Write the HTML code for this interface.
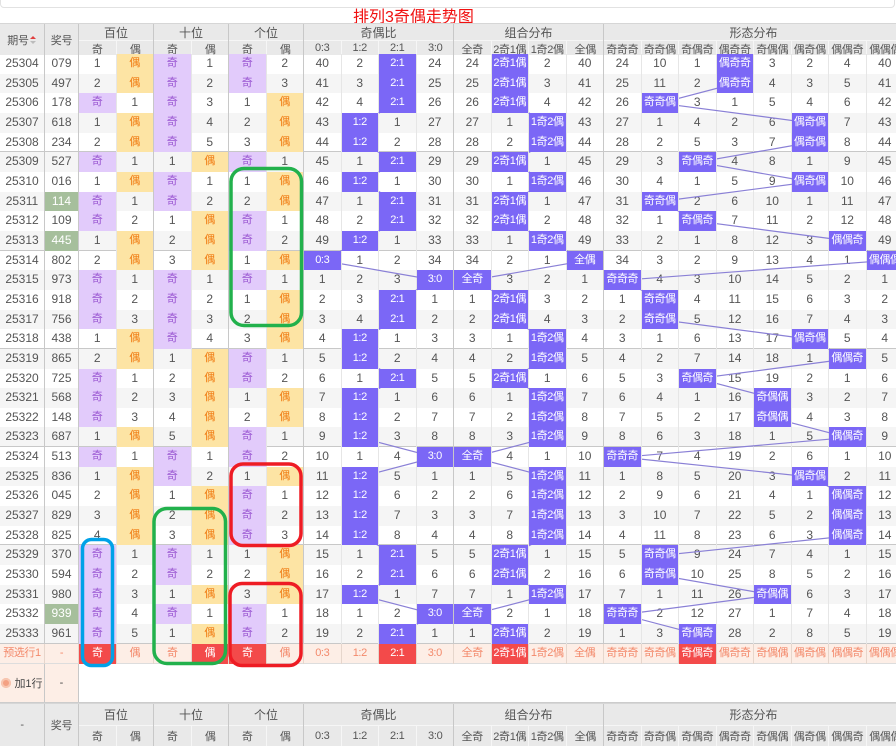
<!DOCTYPE html>
<html><head><meta charset="utf-8"><style>
body{margin:0;width:896px;height:745px;overflow:hidden;background:#fff;font-family:"Liberation Sans","Noto Sans CJK SC",sans-serif;font-size:12px;color:#555;position:relative}
.top{position:absolute;left:0;top:-12px;width:893px;height:18px;border:1px solid #e2e2e2;border-radius:4px}
.title{position:absolute;left:353px;top:7px;font-size:16px;color:#f01010;line-height:22px;white-space:nowrap}
.hd{position:absolute;left:0;display:flex;background:#e9e9e9;border-top:1px solid #d6d6d6;white-space:nowrap;font-size:11px}
.hd i{font-style:normal;display:flex;align-items:center;justify-content:center;box-sizing:border-box;border-right:1px solid #c8c8c8;flex:none;letter-spacing:-0.3px}
.gp{flex:none;box-sizing:border-box;border-right:1px solid #c8c8c8;display:flex;flex-direction:column}
.gp b{font-weight:normal;display:flex;align-items:center;justify-content:center;border-bottom:1px solid #f6f6f6;font-size:12px}
.gp div{display:flex;flex:1}
.gp div i{width:37.5px;border-right:1px solid #f6f6f6}
.gp div i:last-child{border-right:none}
#body{position:absolute;left:0;top:54px}
.r{display:flex;height:19.67px;white-space:nowrap}
.r:nth-child(even){background:#f5f5f5}
.r:nth-child(5n){box-shadow:inset 0 -1px #c8c8c8}
.r i{font-style:normal;flex:none;width:37.5px;height:100%;line-height:19.67px;text-align:center;box-sizing:border-box;border-right:1px solid #e6e6e6;overflow:hidden}
.r i:nth-child(1){width:45px}.r i:nth-child(2){width:34px}
.r i:nth-child(1),.r i:nth-child(2),.r i:nth-child(4),.r i:nth-child(6),.r i:nth-child(8),.r i:nth-child(12),.r i:nth-child(16){border-right-color:#c8c8c8}
.o{background:#e2cbfb;color:#9a56d2;font-size:11px}
.e{background:#fde4a4;color:#f07a10;font-size:11px}
.h{background:#7b67f6;color:#fff;position:relative;z-index:2;font-size:11px;letter-spacing:-0.4px}
.g{background:#a6bf9c;color:#fff}
.pv{background:#fdeee6;color:#f3896b;box-shadow:inset 0 -1px #ddd}
.pv i{border-right-color:#e6d6cc!important;font-size:11px;letter-spacing:-0.4px}
.rd{background:#f34a4a;color:#fff}
.add{position:absolute;left:0;top:664px;width:896px;height:39px;border-bottom:1px solid #ccc;box-sizing:border-box}
.add div{position:absolute;top:0;height:38px;background:#fdeee6;border-right:1px solid #c8c8c8;box-sizing:border-box;display:flex;align-items:center;justify-content:center;color:#444;font-size:11px}
svg{position:absolute;left:0;top:0}
</style></head><body>
<div class="top"></div>
<div class="title">排列3奇偶走势图</div>

<div class="hd" style="top:23px;height:31px">
<i style="width:45px">期号<svg style="position:relative" width="8" height="10" viewBox="0 0 8 10"><path d="M1 4L4 1L7 4Z" fill="#e04040"/><path d="M1 6L4 9L7 6Z" fill="#bbb"/></svg></i>
<i style="width:34px">奖号</i>
<div class="gp" style="width:75px"><b style="height:16px">百位</b><div><i>奇</i><i>偶</i></div></div>
<div class="gp" style="width:75px"><b style="height:16px">十位</b><div><i>奇</i><i>偶</i></div></div>
<div class="gp" style="width:75px"><b style="height:16px">个位</b><div><i>奇</i><i>偶</i></div></div>
<div class="gp" style="width:150px"><b style="height:16px">奇偶比</b><div><i>0:3</i><i>1:2</i><i>2:1</i><i>3:0</i></div></div>
<div class="gp" style="width:150px"><b style="height:16px">组合分布</b><div><i>全奇</i><i>2奇1偶</i><i>1奇2偶</i><i>全偶</i></div></div>
<div class="gp" style="width:300px"><b style="height:16px">形态分布</b><div><i>奇奇奇</i><i>奇奇偶</i><i>奇偶奇</i><i>偶奇奇</i><i>奇偶偶</i><i>偶奇偶</i><i>偶偶奇</i><i>偶偶偶</i></div></div>
</div>

<div id="body">
<div class="r"><i>25304</i><i>079</i><i>1</i><i class="e">偶</i><i class="o">奇</i><i>1</i><i class="o">奇</i><i>2</i><i>40</i><i>2</i><i class="h">2:1</i><i>24</i><i>24</i><i class="h">2奇1偶</i><i>2</i><i>40</i><i>24</i><i>10</i><i>1</i><i class="h">偶奇奇</i><i>3</i><i>2</i><i>4</i><i>40</i></div>
<div class="r"><i>25305</i><i>497</i><i>2</i><i class="e">偶</i><i class="o">奇</i><i>2</i><i class="o">奇</i><i>3</i><i>41</i><i>3</i><i class="h">2:1</i><i>25</i><i>25</i><i class="h">2奇1偶</i><i>3</i><i>41</i><i>25</i><i>11</i><i>2</i><i class="h">偶奇奇</i><i>4</i><i>3</i><i>5</i><i>41</i></div>
<div class="r"><i>25306</i><i>178</i><i class="o">奇</i><i>1</i><i class="o">奇</i><i>3</i><i>1</i><i class="e">偶</i><i>42</i><i>4</i><i class="h">2:1</i><i>26</i><i>26</i><i class="h">2奇1偶</i><i>4</i><i>42</i><i>26</i><i class="h">奇奇偶</i><i>3</i><i>1</i><i>5</i><i>4</i><i>6</i><i>42</i></div>
<div class="r"><i>25307</i><i>618</i><i>1</i><i class="e">偶</i><i class="o">奇</i><i>4</i><i>2</i><i class="e">偶</i><i>43</i><i class="h">1:2</i><i>1</i><i>27</i><i>27</i><i>1</i><i class="h">1奇2偶</i><i>43</i><i>27</i><i>1</i><i>4</i><i>2</i><i>6</i><i class="h">偶奇偶</i><i>7</i><i>43</i></div>
<div class="r"><i>25308</i><i>234</i><i>2</i><i class="e">偶</i><i class="o">奇</i><i>5</i><i>3</i><i class="e">偶</i><i>44</i><i class="h">1:2</i><i>2</i><i>28</i><i>28</i><i>2</i><i class="h">1奇2偶</i><i>44</i><i>28</i><i>2</i><i>5</i><i>3</i><i>7</i><i class="h">偶奇偶</i><i>8</i><i>44</i></div>
<div class="r"><i>25309</i><i>527</i><i class="o">奇</i><i>1</i><i>1</i><i class="e">偶</i><i class="o">奇</i><i>1</i><i>45</i><i>1</i><i class="h">2:1</i><i>29</i><i>29</i><i class="h">2奇1偶</i><i>1</i><i>45</i><i>29</i><i>3</i><i class="h">奇偶奇</i><i>4</i><i>8</i><i>1</i><i>9</i><i>45</i></div>
<div class="r"><i>25310</i><i>016</i><i>1</i><i class="e">偶</i><i class="o">奇</i><i>1</i><i>1</i><i class="e">偶</i><i>46</i><i class="h">1:2</i><i>1</i><i>30</i><i>30</i><i>1</i><i class="h">1奇2偶</i><i>46</i><i>30</i><i>4</i><i>1</i><i>5</i><i>9</i><i class="h">偶奇偶</i><i>10</i><i>46</i></div>
<div class="r"><i>25311</i><i class="g">114</i><i class="o">奇</i><i>1</i><i class="o">奇</i><i>2</i><i>2</i><i class="e">偶</i><i>47</i><i>1</i><i class="h">2:1</i><i>31</i><i>31</i><i class="h">2奇1偶</i><i>1</i><i>47</i><i>31</i><i class="h">奇奇偶</i><i>2</i><i>6</i><i>10</i><i>1</i><i>11</i><i>47</i></div>
<div class="r"><i>25312</i><i>109</i><i class="o">奇</i><i>2</i><i>1</i><i class="e">偶</i><i class="o">奇</i><i>1</i><i>48</i><i>2</i><i class="h">2:1</i><i>32</i><i>32</i><i class="h">2奇1偶</i><i>2</i><i>48</i><i>32</i><i>1</i><i class="h">奇偶奇</i><i>7</i><i>11</i><i>2</i><i>12</i><i>48</i></div>
<div class="r"><i>25313</i><i class="g">445</i><i>1</i><i class="e">偶</i><i>2</i><i class="e">偶</i><i class="o">奇</i><i>2</i><i>49</i><i class="h">1:2</i><i>1</i><i>33</i><i>33</i><i>1</i><i class="h">1奇2偶</i><i>49</i><i>33</i><i>2</i><i>1</i><i>8</i><i>12</i><i>3</i><i class="h">偶偶奇</i><i>49</i></div>
<div class="r"><i>25314</i><i>802</i><i>2</i><i class="e">偶</i><i>3</i><i class="e">偶</i><i>1</i><i class="e">偶</i><i class="h">0:3</i><i>1</i><i>2</i><i>34</i><i>34</i><i>2</i><i>1</i><i class="h">全偶</i><i>34</i><i>3</i><i>2</i><i>9</i><i>13</i><i>4</i><i>1</i><i class="h">偶偶偶</i></div>
<div class="r"><i>25315</i><i>973</i><i class="o">奇</i><i>1</i><i class="o">奇</i><i>1</i><i class="o">奇</i><i>1</i><i>1</i><i>2</i><i>3</i><i class="h">3:0</i><i class="h">全奇</i><i>3</i><i>2</i><i>1</i><i class="h">奇奇奇</i><i>4</i><i>3</i><i>10</i><i>14</i><i>5</i><i>2</i><i>1</i></div>
<div class="r"><i>25316</i><i>918</i><i class="o">奇</i><i>2</i><i class="o">奇</i><i>2</i><i>1</i><i class="e">偶</i><i>2</i><i>3</i><i class="h">2:1</i><i>1</i><i>1</i><i class="h">2奇1偶</i><i>3</i><i>2</i><i>1</i><i class="h">奇奇偶</i><i>4</i><i>11</i><i>15</i><i>6</i><i>3</i><i>2</i></div>
<div class="r"><i>25317</i><i>756</i><i class="o">奇</i><i>3</i><i class="o">奇</i><i>3</i><i>2</i><i class="e">偶</i><i>3</i><i>4</i><i class="h">2:1</i><i>2</i><i>2</i><i class="h">2奇1偶</i><i>4</i><i>3</i><i>2</i><i class="h">奇奇偶</i><i>5</i><i>12</i><i>16</i><i>7</i><i>4</i><i>3</i></div>
<div class="r"><i>25318</i><i>438</i><i>1</i><i class="e">偶</i><i class="o">奇</i><i>4</i><i>3</i><i class="e">偶</i><i>4</i><i class="h">1:2</i><i>1</i><i>3</i><i>3</i><i>1</i><i class="h">1奇2偶</i><i>4</i><i>3</i><i>1</i><i>6</i><i>13</i><i>17</i><i class="h">偶奇偶</i><i>5</i><i>4</i></div>
<div class="r"><i>25319</i><i>865</i><i>2</i><i class="e">偶</i><i>1</i><i class="e">偶</i><i class="o">奇</i><i>1</i><i>5</i><i class="h">1:2</i><i>2</i><i>4</i><i>4</i><i>2</i><i class="h">1奇2偶</i><i>5</i><i>4</i><i>2</i><i>7</i><i>14</i><i>18</i><i>1</i><i class="h">偶偶奇</i><i>5</i></div>
<div class="r"><i>25320</i><i>725</i><i class="o">奇</i><i>1</i><i>2</i><i class="e">偶</i><i class="o">奇</i><i>2</i><i>6</i><i>1</i><i class="h">2:1</i><i>5</i><i>5</i><i class="h">2奇1偶</i><i>1</i><i>6</i><i>5</i><i>3</i><i class="h">奇偶奇</i><i>15</i><i>19</i><i>2</i><i>1</i><i>6</i></div>
<div class="r"><i>25321</i><i>568</i><i class="o">奇</i><i>2</i><i>3</i><i class="e">偶</i><i>1</i><i class="e">偶</i><i>7</i><i class="h">1:2</i><i>1</i><i>6</i><i>6</i><i>1</i><i class="h">1奇2偶</i><i>7</i><i>6</i><i>4</i><i>1</i><i>16</i><i class="h">奇偶偶</i><i>3</i><i>2</i><i>7</i></div>
<div class="r"><i>25322</i><i>148</i><i class="o">奇</i><i>3</i><i>4</i><i class="e">偶</i><i>2</i><i class="e">偶</i><i>8</i><i class="h">1:2</i><i>2</i><i>7</i><i>7</i><i>2</i><i class="h">1奇2偶</i><i>8</i><i>7</i><i>5</i><i>2</i><i>17</i><i class="h">奇偶偶</i><i>4</i><i>3</i><i>8</i></div>
<div class="r"><i>25323</i><i>687</i><i>1</i><i class="e">偶</i><i>5</i><i class="e">偶</i><i class="o">奇</i><i>1</i><i>9</i><i class="h">1:2</i><i>3</i><i>8</i><i>8</i><i>3</i><i class="h">1奇2偶</i><i>9</i><i>8</i><i>6</i><i>3</i><i>18</i><i>1</i><i>5</i><i class="h">偶偶奇</i><i>9</i></div>
<div class="r"><i>25324</i><i>513</i><i class="o">奇</i><i>1</i><i class="o">奇</i><i>1</i><i class="o">奇</i><i>2</i><i>10</i><i>1</i><i>4</i><i class="h">3:0</i><i class="h">全奇</i><i>4</i><i>1</i><i>10</i><i class="h">奇奇奇</i><i>7</i><i>4</i><i>19</i><i>2</i><i>6</i><i>1</i><i>10</i></div>
<div class="r"><i>25325</i><i>836</i><i>1</i><i class="e">偶</i><i class="o">奇</i><i>2</i><i>1</i><i class="e">偶</i><i>11</i><i class="h">1:2</i><i>5</i><i>1</i><i>1</i><i>5</i><i class="h">1奇2偶</i><i>11</i><i>1</i><i>8</i><i>5</i><i>20</i><i>3</i><i class="h">偶奇偶</i><i>2</i><i>11</i></div>
<div class="r"><i>25326</i><i>045</i><i>2</i><i class="e">偶</i><i>1</i><i class="e">偶</i><i class="o">奇</i><i>1</i><i>12</i><i class="h">1:2</i><i>6</i><i>2</i><i>2</i><i>6</i><i class="h">1奇2偶</i><i>12</i><i>2</i><i>9</i><i>6</i><i>21</i><i>4</i><i>1</i><i class="h">偶偶奇</i><i>12</i></div>
<div class="r"><i>25327</i><i>829</i><i>3</i><i class="e">偶</i><i>2</i><i class="e">偶</i><i class="o">奇</i><i>2</i><i>13</i><i class="h">1:2</i><i>7</i><i>3</i><i>3</i><i>7</i><i class="h">1奇2偶</i><i>13</i><i>3</i><i>10</i><i>7</i><i>22</i><i>5</i><i>2</i><i class="h">偶偶奇</i><i>13</i></div>
<div class="r"><i>25328</i><i>825</i><i>4</i><i class="e">偶</i><i>3</i><i class="e">偶</i><i class="o">奇</i><i>3</i><i>14</i><i class="h">1:2</i><i>8</i><i>4</i><i>4</i><i>8</i><i class="h">1奇2偶</i><i>14</i><i>4</i><i>11</i><i>8</i><i>23</i><i>6</i><i>3</i><i class="h">偶偶奇</i><i>14</i></div>
<div class="r"><i>25329</i><i>370</i><i class="o">奇</i><i>1</i><i class="o">奇</i><i>1</i><i>1</i><i class="e">偶</i><i>15</i><i>1</i><i class="h">2:1</i><i>5</i><i>5</i><i class="h">2奇1偶</i><i>1</i><i>15</i><i>5</i><i class="h">奇奇偶</i><i>9</i><i>24</i><i>7</i><i>4</i><i>1</i><i>15</i></div>
<div class="r"><i>25330</i><i>594</i><i class="o">奇</i><i>2</i><i class="o">奇</i><i>2</i><i>2</i><i class="e">偶</i><i>16</i><i>2</i><i class="h">2:1</i><i>6</i><i>6</i><i class="h">2奇1偶</i><i>2</i><i>16</i><i>6</i><i class="h">奇奇偶</i><i>10</i><i>25</i><i>8</i><i>5</i><i>2</i><i>16</i></div>
<div class="r"><i>25331</i><i>980</i><i class="o">奇</i><i>3</i><i>1</i><i class="e">偶</i><i>3</i><i class="e">偶</i><i>17</i><i class="h">1:2</i><i>1</i><i>7</i><i>7</i><i>1</i><i class="h">1奇2偶</i><i>17</i><i>7</i><i>1</i><i>11</i><i>26</i><i class="h">奇偶偶</i><i>6</i><i>3</i><i>17</i></div>
<div class="r"><i>25332</i><i class="g">939</i><i class="o">奇</i><i>4</i><i class="o">奇</i><i>1</i><i class="o">奇</i><i>1</i><i>18</i><i>1</i><i>2</i><i class="h">3:0</i><i class="h">全奇</i><i>2</i><i>1</i><i>18</i><i class="h">奇奇奇</i><i>2</i><i>12</i><i>27</i><i>1</i><i>7</i><i>4</i><i>18</i></div>
<div class="r"><i>25333</i><i>961</i><i class="o">奇</i><i>5</i><i>1</i><i class="e">偶</i><i class="o">奇</i><i>2</i><i>19</i><i>2</i><i class="h">2:1</i><i>1</i><i>1</i><i class="h">2奇1偶</i><i>2</i><i>19</i><i>1</i><i>3</i><i class="h">奇偶奇</i><i>28</i><i>2</i><i>8</i><i>5</i><i>19</i></div>
<div class="r pv" style="height:20px"><i>预选行1</i><i>-</i><i class="rd">奇</i><i>偶</i><i>奇</i><i class="rd">偶</i><i class="rd">奇</i><i>偶</i><i>0:3</i><i>1:2</i><i class="rd">2:1</i><i>3:0</i><i>全奇</i><i class="rd">2奇1偶</i><i>1奇2偶</i><i>全偶</i><i>奇奇奇</i><i>奇奇偶</i><i class="rd">奇偶奇</i><i>偶奇奇</i><i>奇偶偶</i><i>偶奇偶</i><i>偶偶奇</i><i>偶偶偶</i></div>
</div>

<div class="add"><div style="left:0;width:45px"><span style="display:inline-block;width:10px;height:10px;border-radius:50%;background:#f4a183;box-shadow:inset 0 0 0 2px #f7c6b0;margin-right:3px"></span>加1行</div><div style="left:45px;width:34px">-</div></div>

<div class="hd" style="top:703px;height:42px">
<i style="width:45px">-</i>
<i style="width:34px">奖号</i>
<div class="gp" style="width:75px"><b style="height:21px">百位</b><div><i>奇</i><i>偶</i></div></div>
<div class="gp" style="width:75px"><b style="height:21px">十位</b><div><i>奇</i><i>偶</i></div></div>
<div class="gp" style="width:75px"><b style="height:21px">个位</b><div><i>奇</i><i>偶</i></div></div>
<div class="gp" style="width:150px"><b style="height:21px">奇偶比</b><div><i>0:3</i><i>1:2</i><i>2:1</i><i>3:0</i></div></div>
<div class="gp" style="width:150px"><b style="height:21px">组合分布</b><div><i>全奇</i><i>2奇1偶</i><i>1奇2偶</i><i>全偶</i></div></div>
<div class="gp" style="width:300px"><b style="height:21px">形态分布</b><div><i>奇奇奇</i><i>奇奇偶</i><i>奇偶奇</i><i>偶奇奇</i><i>奇偶偶</i><i>偶奇偶</i><i>偶偶奇</i><i>偶偶偶</i></div></div>
</div>

<svg width="896" height="745" style="z-index:1;pointer-events:none"><g fill="none" stroke="#8a80d6" stroke-width="1.2">
<polyline points="397.75,63.84 397.75,83.51 397.75,103.18 360.25,122.85 360.25,142.52 397.75,162.19 360.25,181.86 397.75,201.53 397.75,221.2 360.25,240.87 322.75,260.54 435.25,280.21 397.75,299.88 397.75,319.55 360.25,339.22 360.25,358.89 397.75,378.56 360.25,398.23 360.25,417.9 360.25,437.57 435.25,457.24 360.25,476.91 360.25,496.58 360.25,516.25 360.25,535.92 397.75,555.59 397.75,575.26 360.25,594.93 435.25,614.6 397.75,634.27"/>
<polyline points="510.25,63.84 510.25,83.51 510.25,103.18 547.75,122.85 547.75,142.52 510.25,162.19 547.75,181.86 510.25,201.53 510.25,221.2 547.75,240.87 585.25,260.54 472.75,280.21 510.25,299.88 510.25,319.55 547.75,339.22 547.75,358.89 510.25,378.56 547.75,398.23 547.75,417.9 547.75,437.57 472.75,457.24 547.75,476.91 547.75,496.58 547.75,516.25 547.75,535.92 510.25,555.59 510.25,575.26 547.75,594.93 472.75,614.6 510.25,634.27"/>
<polyline points="735.25,63.84 735.25,83.51 660.25,103.18 810.25,122.85 810.25,142.52 697.75,162.19 810.25,181.86 660.25,201.53 697.75,221.2 847.75,240.87 885.25,260.54 622.75,280.21 660.25,299.88 660.25,319.55 810.25,339.22 847.75,358.89 697.75,378.56 772.75,398.23 772.75,417.9 847.75,437.57 622.75,457.24 810.25,476.91 847.75,496.58 847.75,516.25 847.75,535.92 660.25,555.59 660.25,575.26 772.75,594.93 622.75,614.6 697.75,634.27"/>
</g></svg>

<svg width="896" height="745" style="z-index:5;pointer-events:none"><g fill="none" stroke-width="3.5">
<rect x="231" y="168.5" width="70.5" height="157" rx="13" stroke="#22b14c"/>
<rect x="154" y="508.5" width="71.5" height="155" rx="13" stroke="#22b14c"/>
<rect x="231" y="464" width="70" height="81.5" rx="12" stroke="#ee1c24"/>
<rect x="230" y="583.5" width="71" height="82" rx="12" stroke="#ee1c24"/>
<rect x="82.5" y="539.5" width="30" height="126" rx="9" stroke="#00a2e8"/>
</g></svg>
</body></html>
